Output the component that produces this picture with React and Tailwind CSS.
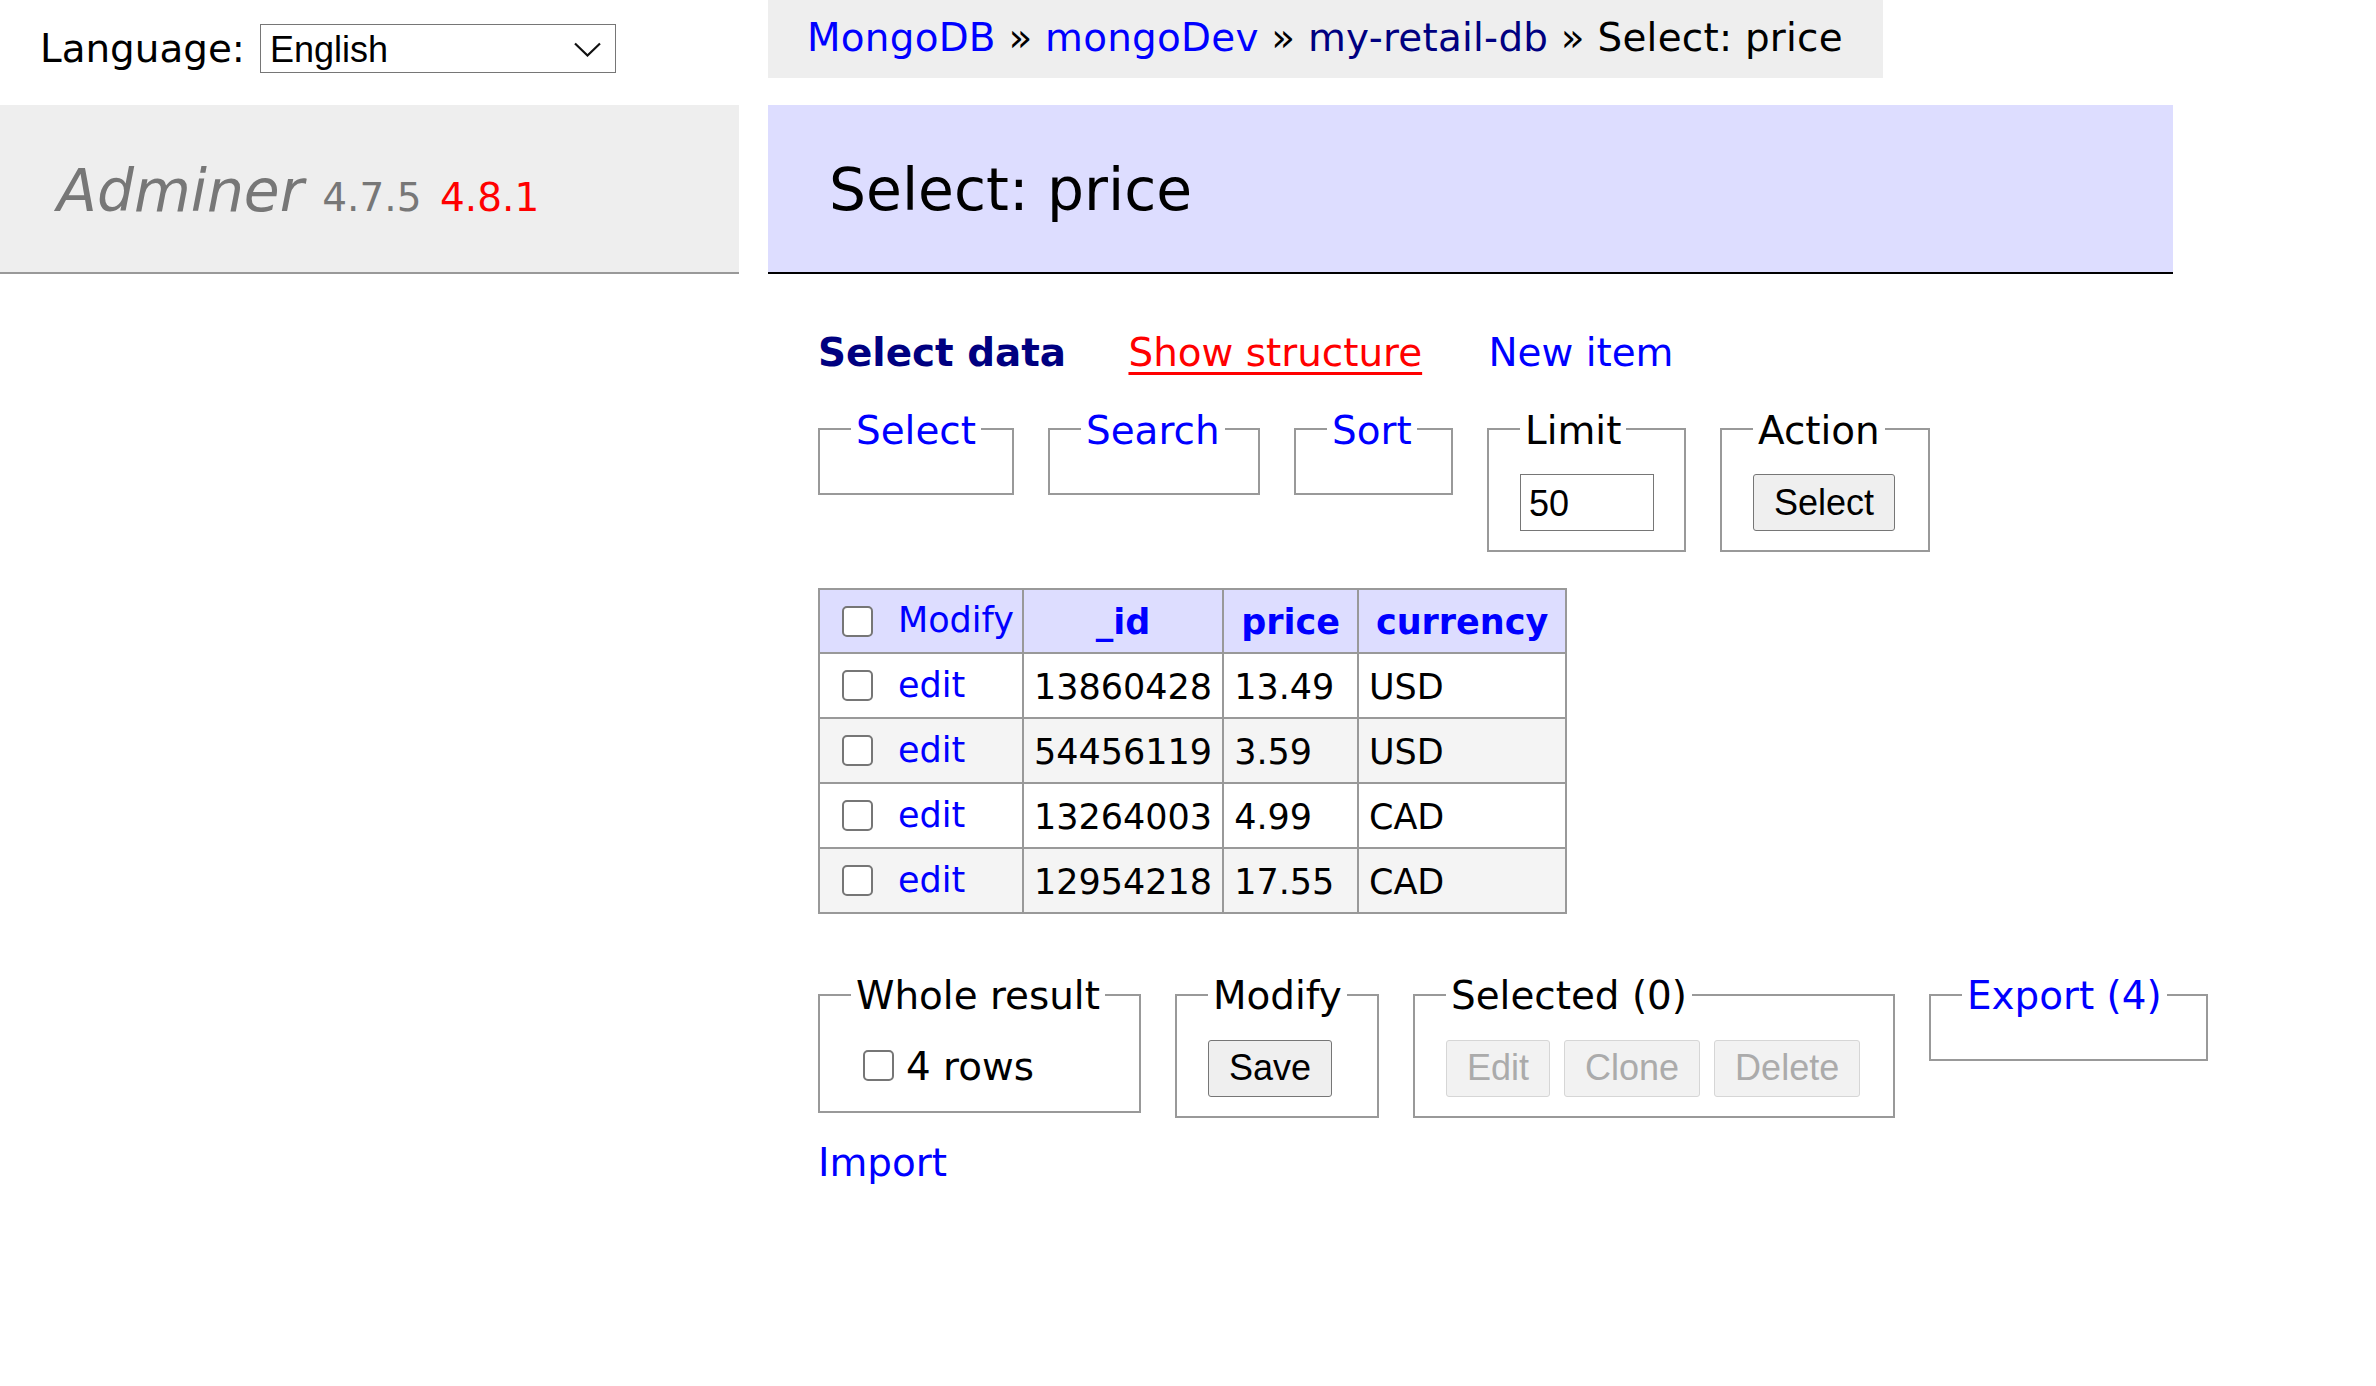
import React from "react";

const Check = () => (
  <span className="inline-block shrink-0 w-[31px] h-[31px] border-2 border-[#767676] rounded-[5px] bg-white" />
);

const Btn = ({ children, disabled }) =>
  disabled ? (
    <button
      disabled
      className="h-[57px] px-[20px] border border-[#d6d6d6] rounded-[3px] bg-[#f2f2f2] text-[#ababab] font-['Liberation_Sans',Arial,sans-serif] text-[36px] leading-none"
    >
      {children}
    </button>
  ) : (
    <button className="h-[57px] px-[20px] border border-[#767676] rounded-[3px] bg-[#efefef] text-black font-['Liberation_Sans',Arial,sans-serif] text-[36px] leading-none">
      {children}
    </button>
  );

const Fieldset = ({ legend, width, children }) => (
  <fieldset className={`${width} shrink-0 border-2 border-[#999] px-[31px] pt-[19px] pb-[19px] min-w-0`}>
    <legend className="px-[5px] leading-[48.6px] pt-[3px]">{legend}</legend>
    {children}
  </fieldset>
);

const rows = [
  { id: "13860428", price: "13.49", currency: "USD" },
  { id: "54456119", price: "3.59", currency: "USD" },
  { id: "13264003", price: "4.99", currency: "CAD" },
  { id: "12954218", price: "17.55", currency: "CAD" },
];

export default function App() {
  return (
    <div className="flex bg-white text-black min-h-screen font-['DejaVu_Sans',Verdana,sans-serif] text-[38.88px] leading-[1.25]">
      {/* MENU */}
      <div className="w-[739px] shrink-0">
        <div className="h-[105px] pl-[40px] pt-[13px]">
          <div className="flex items-center h-[70px]">
            <span className="pt-[3px]">Language:</span>
            <div className="ml-[15px] w-[356px] h-[49px] border border-[#767676] bg-white flex items-center justify-between pl-[9px] pr-[14px] font-['Liberation_Sans',Arial,sans-serif] text-[36px]">
              <span className="pt-[2px]">English</span>
              <svg width="27" height="15" viewBox="0 0 27 15" fill="none" className="mt-[3px]">
                <path d="M1 1.5 L13.5 13.5 L26 1.5" stroke="#111" strokeWidth="2.2" />
              </svg>
            </div>
          </div>
        </div>

        <h1 className="h-[169px] bg-[#eee] border-b-2 border-[#999] px-[57px] pt-[50px] text-[58.32px] leading-[72.9px] text-[#777] font-normal whitespace-nowrap">
          <span className="italic">Adminer</span>{" "}
          <span className="text-[39px] leading-none text-[#777]">4.7.5</span>{" "}
          <span className="text-[39px] leading-none text-[#f00]">4.8.1</span>
        </h1>
      </div>

      {/* MAIN */}
      <div className="ml-[29px]">
        <div className="h-[78px] w-fit bg-[#eee] pl-[39px] pr-[40px] pt-[3px] leading-[70px] whitespace-nowrap tracking-[0.25px]">
          <span className="text-[#00f]">MongoDB</span> »{" "}
          <span className="text-[#00f]">mongoDev</span> »{" "}
          <span className="text-[#000080]">my-retail-db</span> » Select: price
        </div>

        <h2 className="mt-[27px] h-[169px] w-[1405px] bg-[#ddf] border-b-2 border-black px-[61px] pt-[49px] text-[58.32px] leading-[72.9px] font-normal">
          Select: price
        </h2>

        <div className="pl-[50px]">
          <p className="mt-[55px] leading-[48.6px] whitespace-nowrap">
            <span className="font-bold text-[#000080] mr-[50px]">Select data</span>{" "}
            <span className="text-[#f00] underline decoration-[3px] underline-offset-[6px] mr-[54px]">Show structure</span>{" "}
            <span className="text-[#00f]">New item</span>
          </p>

          {/* SEARCH FORM */}
          <div className="mt-[26px] flex items-start gap-[34px]">
            <Fieldset width="w-[196px]" legend={<span className="text-[#00f]">Select</span>} />
            <Fieldset width="w-[212px]" legend={<span className="text-[#00f]">Search</span>} />
            <Fieldset width="w-[159px]" legend={<span className="text-[#00f]">Sort</span>} />
            <Fieldset width="w-[199px]" legend="Limit">
              <div className="w-[134px] h-[57px] border border-[#767676] bg-white flex items-center pl-[8px] pt-[2px] font-['Liberation_Sans',Arial,sans-serif] text-[36px]">
                50
              </div>
            </Fieldset>
            <Fieldset width="w-[210px]" legend="Action">
              <Btn>Select</Btn>
            </Fieldset>
          </div>

          {/* RESULTS */}
          <table className="mt-[36px] border-collapse border-t-2 border-l-2 border-[#999] text-[35px] leading-[1.25]">
            <thead>
              <tr className="bg-[#ddf] h-[64px]">
                <td className="border-r-2 border-b-2 border-[#999] pl-[22px] pr-[8px] align-middle whitespace-nowrap">
                  <div className="flex items-center">
                    <Check />
                    <span className="ml-[25px] text-[#00f]">Modify</span>
                  </div>
                </td>
                <th className="border-r-2 border-b-2 border-[#999] px-[17px] pt-[4px] text-center text-[#00f]">_id</th>
                <th className="border-r-2 border-b-2 border-[#999] px-[17px] pt-[4px] text-center text-[#00f]">price</th>
                <th className="border-r-2 border-b-2 border-[#999] px-[17px] pt-[4px] text-center text-[#00f]">currency</th>
              </tr>
            </thead>
            <tbody>
              {rows.map((r, i) => (
                <tr key={r.id} className={i % 2 ? "h-[65px] bg-[#f4f4f4]" : "h-[65px] bg-white"}>
                  <td className="border-r-2 border-b-2 border-[#999] pl-[22px] pr-[8px] align-middle">
                    <div className="flex items-center">
                      <Check />
                      <span className="ml-[25px] text-[#00f]">edit</span>
                    </div>
                  </td>
                  <td className="border-r-2 border-b-2 border-[#999] px-[10px] pt-[5px] align-middle">{r.id}</td>
                  <td className="border-r-2 border-b-2 border-[#999] px-[10px] pt-[5px] align-middle">{r.price}</td>
                  <td className="border-r-2 border-b-2 border-[#999] px-[10px] pt-[5px] align-middle">{r.currency}</td>
                </tr>
              ))}
            </tbody>
          </table>

          {/* FOOTER */}
          <div className="mt-[55px] flex items-start gap-[34px]">
            <Fieldset width="w-[323px]" legend="Whole result">
              <div className="flex items-center h-[52px] pl-[12px]">
                <Check />
                <span className="ml-[12px] pt-[3px]">4 rows</span>
              </div>
            </Fieldset>
            <Fieldset width="w-[204px]" legend="Modify">
              <Btn>Save</Btn>
            </Fieldset>
            <Fieldset width="w-[482px]" legend="Selected (0)">
              <div className="flex gap-[14px]">
                <Btn disabled>Edit</Btn>
                <Btn disabled>Clone</Btn>
                <Btn disabled>Delete</Btn>
              </div>
            </Fieldset>
            <Fieldset width="w-[279px]" legend={<span className="text-[#00f]">Export (4)</span>} />
          </div>

          <p className="mt-[18px] pt-[3px] leading-[48.6px] text-[#00f]">Import</p>
        </div>
      </div>
    </div>
  );
}
